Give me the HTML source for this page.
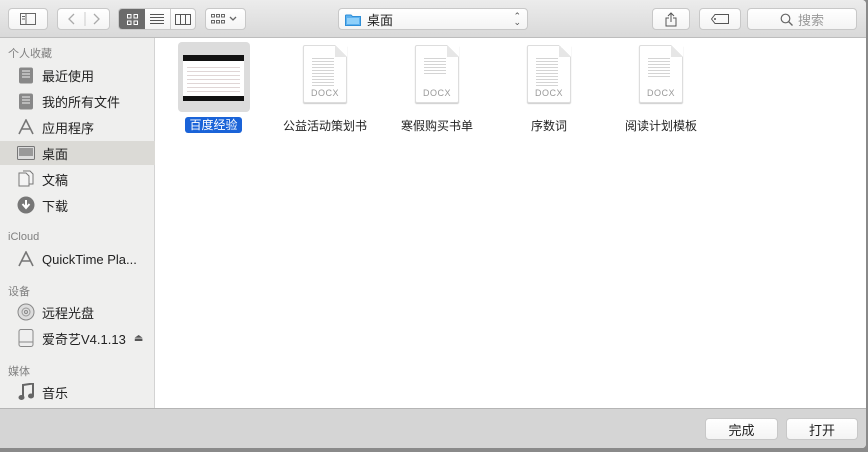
<!DOCTYPE html>
<html><head><meta charset="utf-8"><style>
*{box-sizing:border-box;margin:0;padding:0}
body{width:868px;height:452px;overflow:hidden;background:#8a8a8a;font-family:"Liberation Sans","Noto Sans CJK SC",sans-serif;position:relative}
.win{position:absolute;left:0;top:0;width:866px;height:448px;background:#fff;overflow:hidden;border-radius:0 4px 4px 0}
.tb{position:absolute;left:0;top:0;width:866px;height:38px;background:linear-gradient(#ececec,#d9d9d9);border-bottom:1px solid #bdbdbd}
.btn{position:absolute;top:8px;height:22px;background:linear-gradient(#fff,#f4f4f4);border:1px solid #c8c8c8;border-radius:4px;display:flex;align-items:center;justify-content:center;color:#6a6a6a;font-size:13px}
.side{position:absolute;left:0;top:38px;width:155px;height:370px;background:#efefee;border-right:1px solid #d3d3d3}
.hd{position:absolute;left:8px;font-size:11px;color:#808080}
.it{position:absolute;left:0;width:155px;height:24px;display:flex;align-items:center;font-size:13px;color:#222}
.it .ic{width:20px;height:18px;margin-left:16px;margin-right:6px;display:flex;align-items:center;justify-content:center;color:#777}
.sel{background:#dbdad6}
.bot{position:absolute;left:0;top:408px;width:866px;height:40px;background:#d5d5d5;border-top:1px solid #b5b5b5}
.file{position:absolute;top:42px;width:112px;text-align:center;font-size:12px;color:#222}
.doc{position:relative;margin:3px auto 0;width:44px;height:58px;background:#fff;border:1px solid #ddd;border-radius:2px;box-shadow:0 1px 1px #ccc}
.doc:after{content:"";position:absolute;right:-1px;top:-1px;width:12px;height:12px;background:linear-gradient(225deg,#fff 50%,#e6e6e6 50%)}
.doc span{position:absolute;bottom:4px;left:0;width:100%;font-size:9px;color:#999;letter-spacing:.5px}
.doc i{position:absolute;left:8px;top:10px;width:22px;height:30px;background:repeating-linear-gradient(#fff 0 2px,#d4d4d4 2px 3px)}
</style></head><body>
<div class="win">
<div class="tb">
 <div class="btn" style="left:8px;width:40px"><svg width="16" height="12"><rect x=".5" y=".5" width="15" height="11" fill="none" stroke="#666"/><line x1="6" y1="1" x2="6" y2="11" stroke="#666"/><line x1="2" y1="3.5" x2="5" y2="3.5" stroke="#666"/><line x1="2" y1="6" x2="5" y2="6" stroke="#666"/></svg></div>
 <div class="btn" style="left:57px;width:53px;border-radius:4px"><svg width="50" height="14"><path d="M15 2l-5 5 5 5M35 2l5 5-5 5" fill="none" stroke="#aaa" stroke-width="1.3"/><line x1="26" y1="-4" x2="26" y2="18" stroke="#ccc"/></svg></div>
 <div class="btn" style="left:118px;width:78px;padding:0;overflow:hidden;justify-content:flex-start">
  <div style="width:27px;height:22px;background:#6b6b6b;display:flex;align-items:center;justify-content:center"><svg width="11" height="11"><g fill="none" stroke="#fff"><rect x=".5" y=".5" width="3.5" height="3.5"/><rect x="7" y=".5" width="3.5" height="3.5"/><rect x=".5" y="7" width="3.5" height="3.5"/><rect x="7" y="7" width="3.5" height="3.5"/></g></svg></div>
  <div style="width:26px;height:22px;display:flex;align-items:center;justify-content:center;border-right:1px solid #ccc"><svg width="14" height="10"><path d="M0 .5h14M0 3.5h14M0 6.5h14M0 9.5h14" stroke="#555"/></svg></div>
  <div style="width:25px;height:22px;display:flex;align-items:center;justify-content:center"><svg width="16" height="11"><rect x=".5" y=".5" width="15" height="10" fill="none" stroke="#555"/><path d="M5.5 1v9M10.5 1v9" stroke="#555"/></svg></div>
 </div>
 <div class="btn" style="left:205px;width:41px"><svg width="30" height="12"><g fill="none" stroke="#666"><rect x=".5" y="1.5" width="3" height="2.5"/><rect x="5.5" y="1.5" width="3" height="2.5"/><rect x="10.5" y="1.5" width="3" height="2.5"/><rect x=".5" y="7.5" width="3" height="2.5"/><rect x="5.5" y="7.5" width="3" height="2.5"/><rect x="10.5" y="7.5" width="3" height="2.5"/><path d="M19 4l3 3 3-3" stroke-width="1.3"/></g></svg></div>
 <div class="btn" style="left:338px;width:190px;justify-content:flex-start;padding-left:6px;color:#222"><svg width="16" height="13"><path d="M.5 2.5v10h15v-9h-8l-1.5-1.5h-5z" fill="#5db1ef" stroke="#2f8fd8"/><rect x="2" y="5" width="12" height="6" fill="#8fd0fa"/></svg><span style="margin-left:6px">桌面</span><span style="position:absolute;right:6px;font-size:9px;line-height:6px;color:#555">⌃<br>⌄</span></div>
 <div class="btn" style="left:652px;width:38px"><svg width="12" height="15"><path d="M6 1v9M3 4l3-3 3 3M4 6H1v8h10V6H8" fill="none" stroke="#555"/></svg></div>
 <div class="btn" style="left:699px;width:42px"><svg width="18" height="10"><path d="M4 .5h13.5v9H4L.5 5z" fill="none" stroke="#555"/><circle cx="4" cy="5" r="1" fill="#555"/></svg></div>
 <div class="btn" style="left:747px;width:110px;color:#999"><svg width="13" height="13"><circle cx="5.5" cy="5.5" r="4.3" fill="none" stroke="#666" stroke-width="1.2"/><path d="M8.5 8.5l4 4" stroke="#666" stroke-width="1.3"/></svg><span style="margin-left:5px">搜索</span></div>
</div>
<div class="side">
 <div class="hd" style="top:7px">个人收藏</div>
 <div class="it" style="top:25px"><div class="ic"><svg width="16" height="17"><rect x="1" y=".5" width="14" height="16" rx="2" fill="#888"/><path d="M4 4h8M4 7h8M4 10h8" stroke="#eee"/></svg></div>最近使用</div>
 <div class="it" style="top:51px"><div class="ic"><svg width="16" height="17"><rect x="1" y=".5" width="14" height="16" rx="2" fill="#888"/><path d="M4 4h8M4 7h8M4 10h8" stroke="#eee"/></svg></div>我的所有文件</div>
 <div class="it" style="top:77px"><div class="ic"><svg width="18" height="16"><path d="M2 15L9 1l7 14M4 10h10" fill="none" stroke="#777" stroke-width="1.6"/></svg></div>应用程序</div>
 <div class="it sel" style="top:103px"><div class="ic"><svg width="18" height="14"><rect x=".5" y=".5" width="17" height="13" rx="1" fill="#ddd" stroke="#777"/><rect x="2" y="2" width="14" height="8" fill="#999"/></svg></div>桌面</div>
 <div class="it" style="top:129px"><div class="ic"><svg width="16" height="18"><path d="M1 3h7l3 3v10H1z M5 1h7l3 3v10h-4" fill="#f4f4f4" stroke="#777"/></svg></div>文稿</div>
 <div class="it" style="top:155px"><div class="ic"><svg width="18" height="18"><circle cx="9" cy="9" r="8.5" fill="#777"/><path d="M9 4v7M5.5 8L9 12l3.5-4" fill="none" stroke="#fff" stroke-width="2"/></svg></div>下载</div>
 <div class="hd" style="top:193px">iCloud</div>
 <div class="it" style="top:209px"><div class="ic"><svg width="18" height="16"><path d="M2 15L9 1l7 14M4 10h10" fill="none" stroke="#777" stroke-width="1.6"/></svg></div>QuickTime Pla...</div>
 <div class="hd" style="top:245px">设备</div>
 <div class="it" style="top:262px"><div class="ic"><svg width="18" height="18"><circle cx="9" cy="9" r="8" fill="#ddd" stroke="#888"/><circle cx="9" cy="9" r="4" fill="none" stroke="#999"/><circle cx="9" cy="9" r="1.5" fill="none" stroke="#888"/></svg></div>远程光盘</div>
 <div class="it" style="top:288px"><div class="ic"><svg width="16" height="18"><rect x="1" y=".5" width="14" height="17" rx="2" fill="#eee" stroke="#888"/><path d="M1 13h14" stroke="#888"/></svg></div>爱奇艺V4.1.13<span style="margin-left:8px;font-size:10px;color:#555">⏏</span></div>
 <div class="hd" style="top:325px">媒体</div>
 <div class="it" style="top:342px"><div class="ic"><svg width="16" height="18"><path d="M5 14V2l10-1.5v12" fill="none" stroke="#666" stroke-width="2"/><ellipse cx="3.5" cy="14.5" rx="3" ry="2.5" fill="#666"/><ellipse cx="13" cy="13" rx="3" ry="2.5" fill="#666"/></svg></div>音乐</div>
</div>
<div style="position:absolute;left:178px;top:42px;width:72px;height:70px;background:#dcdcdc;border-radius:4px"></div>
<div style="position:absolute;left:183px;top:55px;width:61px;height:46px;background:#fff;border-top:6px solid #111;border-bottom:5px solid #111"><div style="margin:3px 4px;height:28px;background:repeating-linear-gradient(#fff 0 3px,#e0d6d6 3px 4px)"></div></div>
<div style="position:absolute;left:185px;top:117px;width:57px;height:16px;background:#1a63d8;color:#fff;font-size:12px;border-radius:3px;text-align:center;line-height:16px">百度经验</div>
<div class="file" style="left:269px"><div class="doc"><i></i><span>DOCX</span></div><div style="margin-top:14px">公益活动策划书</div></div>
<div class="file" style="left:381px"><div class="doc"><i style="height:18px"></i><span>DOCX</span></div><div style="margin-top:14px">寒假购买书单</div></div>
<div class="file" style="left:493px"><div class="doc"><i></i><span>DOCX</span></div><div style="margin-top:14px">序数词</div></div>
<div class="file" style="left:605px"><div class="doc"><i style="height:22px"></i><span>DOCX</span></div><div style="margin-top:14px">阅读计划模板</div></div>
<div class="bot">
 <div class="btn" style="left:705px;top:9px;width:73px;color:#222">完成</div>
 <div class="btn" style="left:786px;top:9px;width:72px;color:#222">打开</div>
</div>
</div>
</body></html>
